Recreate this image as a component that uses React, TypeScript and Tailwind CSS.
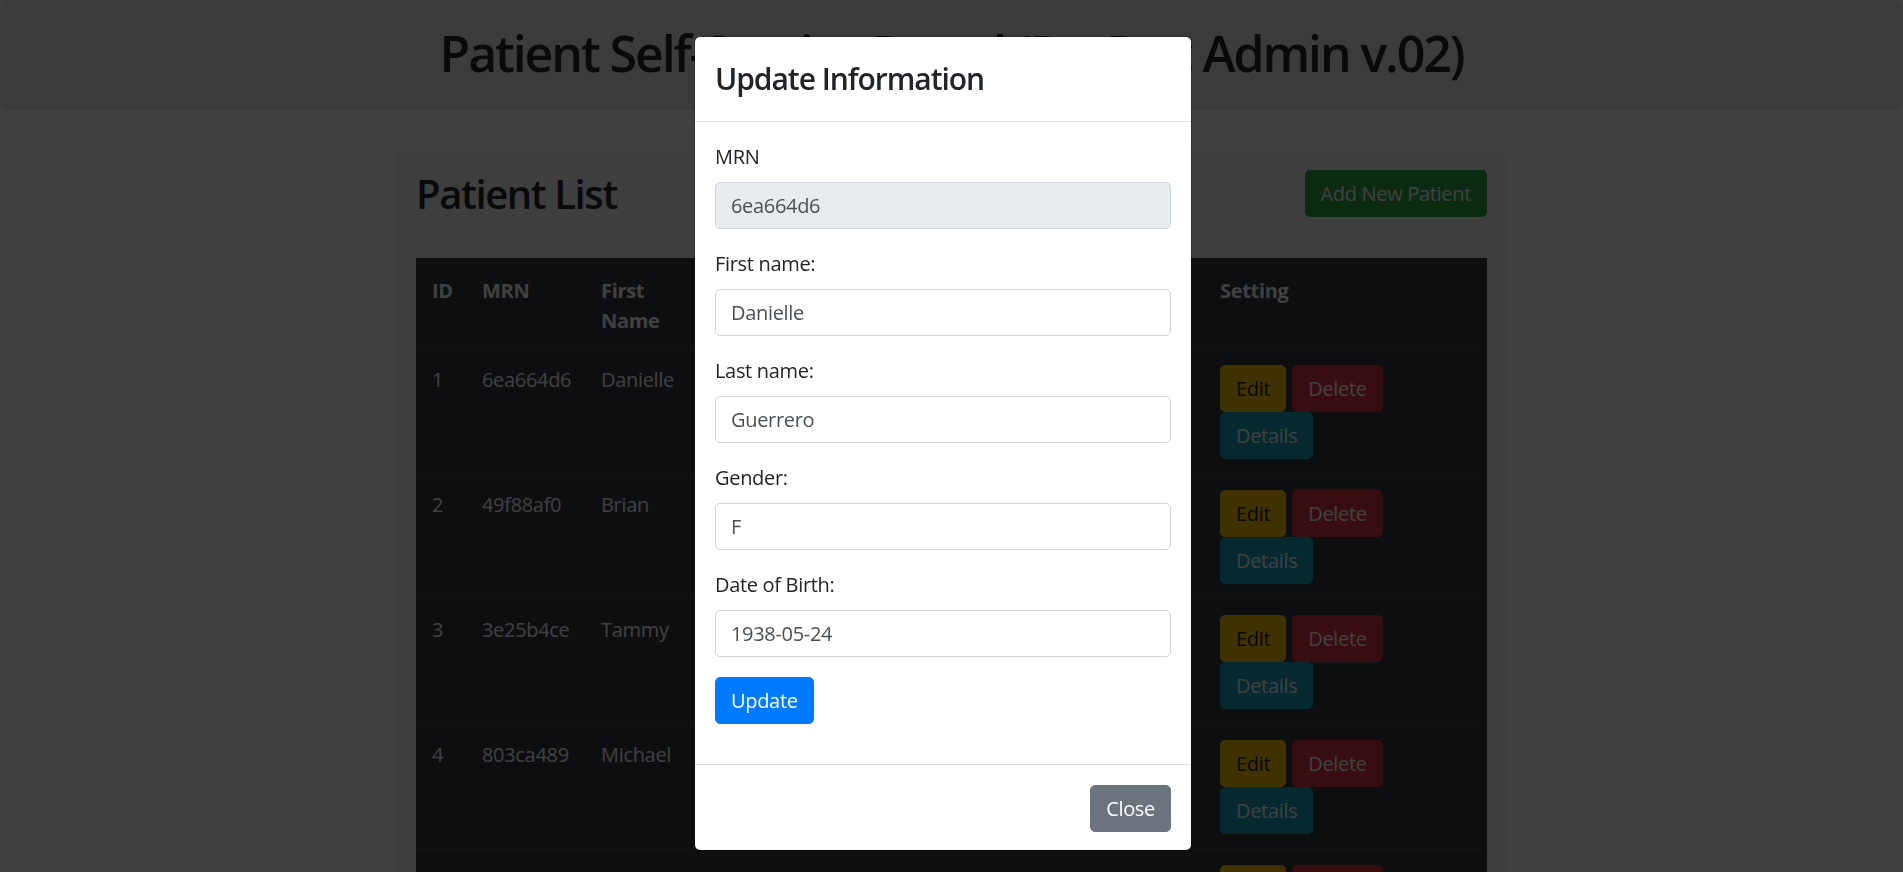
import React from 'react';

const PATIENTS = [
  { id: 1, mrn: '6ea664d6', first: 'Danielle', last: 'Guerrero', gender: 'F', dob: '1938-05-24' },
  { id: 2, mrn: '49f88af0', first: 'Brian', last: 'Moore', gender: 'M', dob: '1957-02-11' },
  { id: 3, mrn: '3e25b4ce', first: 'Tammy', last: 'Walker', gender: 'F', dob: '1972-09-30' },
  { id: 4, mrn: '803ca489', first: 'Michael', last: 'Reyes', gender: 'M', dob: '1949-12-03' },
  { id: 5, mrn: '1b7d20fe', first: 'Laura', last: 'Hughes', gender: 'F', dob: '1985-07-18' },
];

const COLS = 'grid grid-cols-[50px_119px_118px_136px_120px_245px_282px]';
const BTN = 'inline-flex h-[47px] items-center rounded-[5px] border px-[15px] text-[20px] leading-[30px]';

const Field = ({ label, value, disabled }: { label: string; value: string; disabled?: boolean }) => (
  <div className="mb-5">
    <label className="mb-[10px] block text-[20px] leading-[30px] text-[#212529]">{label}</label>
    <input
      readOnly
      value={value}
      className={`block h-[47px] w-full rounded-[5px] border border-[#ced4da] px-[15px] text-[20px] leading-[30px] text-[#495057] outline-none ${
        disabled ? 'bg-[#e9ecef]' : 'bg-white'
      }`}
    />
  </div>
);

export default function App() {
  return (
    <div className="h-screen overflow-hidden bg-white font-['Open_Sans',sans-serif] tracking-[-0.02em] text-[#212529]">
      <div className="flex h-[110px] justify-center rounded-[6px] bg-[#e9ecef] pt-[23px]">
        <h1 className="text-[50px] leading-[60px] font-semibold tracking-[-0.042em]">
          Patient Self-Service Portal (Dr. Doc Admin v.02)
        </h1>
      </div>

      <div className="mx-auto mt-10 w-[1111px] rounded-[8px] bg-[#f5f5f5] px-5 pt-5">
        <div className="mb-10 flex items-start justify-between">
          <h2 className="text-[40px] leading-[48px] font-semibold tracking-[-0.035em]">Patient List</h2>
          <button className={`${BTN} border-[#28a745] bg-[#28a745] text-white`}>Add New Patient</button>
        </div>

        <div className="bg-[#343a40] text-[20px] leading-[30px] text-white">
          <div className={`${COLS} border-b border-[#454d55] font-bold`}>
            {['ID', 'MRN', 'First Name', 'Last Name', 'Gender', 'Date of Birth', 'Setting'].map(h => (
              <div key={h} className="px-4 pt-[18px] pb-[12px]">
                {h === 'First Name' ? (
                  <>
                    First
                    <br />
                    Name
                  </>
                ) : (
                  h
                )}
              </div>
            ))}
          </div>
          {PATIENTS.map(p => (
            <div key={p.id} className={`${COLS} border-b border-[#454d55]`}>
              <div className="px-4 pt-4 pb-[14px]">{p.id}</div>
              <div className="px-4 pt-4 pb-[14px]">{p.mrn}</div>
              <div className="px-4 pt-4 pb-[14px]">{p.first}</div>
              <div className="px-4 pt-4 pb-[14px]">{p.last}</div>
              <div className="px-4 pt-4 pb-[14px]">{p.gender}</div>
              <div className="px-4 pt-4 pb-[14px]">{p.dob}</div>
              <div className="px-4 pt-4 pb-[14px]">
                <div className="flex gap-[6px]">
                  <button className={`${BTN} border-[#ffc107] bg-[#ffc107] text-[#212529]`}>Edit</button>
                  <button className={`${BTN} border-[#dc3545] bg-[#dc3545] text-white`}>Delete</button>
                </div>
                <div className="flex">
                  <button className={`${BTN} border-[#17a2b8] bg-[#17a2b8] text-white`}>Details</button>
                </div>
              </div>
            </div>
          ))}
        </div>
      </div>

      {/* backdrop */}
      <div className="fixed inset-0 z-10 bg-black/75" />

      {/* modal */}
      <div className="fixed inset-0 z-20 flex justify-center pr-[17px]">
        <div className="mt-[36px] h-fit w-[498px] rounded-[6px] border border-black/20 bg-white bg-clip-padding">
          <div className="border-b border-[#dee2e6] px-5 py-6">
            <h4 className="text-[30px] leading-9 font-semibold tracking-[-0.035em]">Update Information</h4>
          </div>
          <div className="px-5 pt-5 pb-10">
            <Field label="MRN" value="6ea664d6" disabled />
            <Field label="First name:" value="Danielle" />
            <Field label="Last name:" value="Guerrero" />
            <Field label="Gender:" value="F" />
            <Field label="Date of Birth:" value="1938-05-24" />
            <button className={`${BTN} border-[#007bff] bg-[#007bff] text-white`}>Update</button>
          </div>
          <div className="flex justify-end border-t border-[#dee2e6] px-5 pt-5 pb-[18px]">
            <button className={`${BTN} border-[#6c757d] bg-[#6c757d] text-white`}>Close</button>
          </div>
        </div>
      </div>
    </div>
  );
}
